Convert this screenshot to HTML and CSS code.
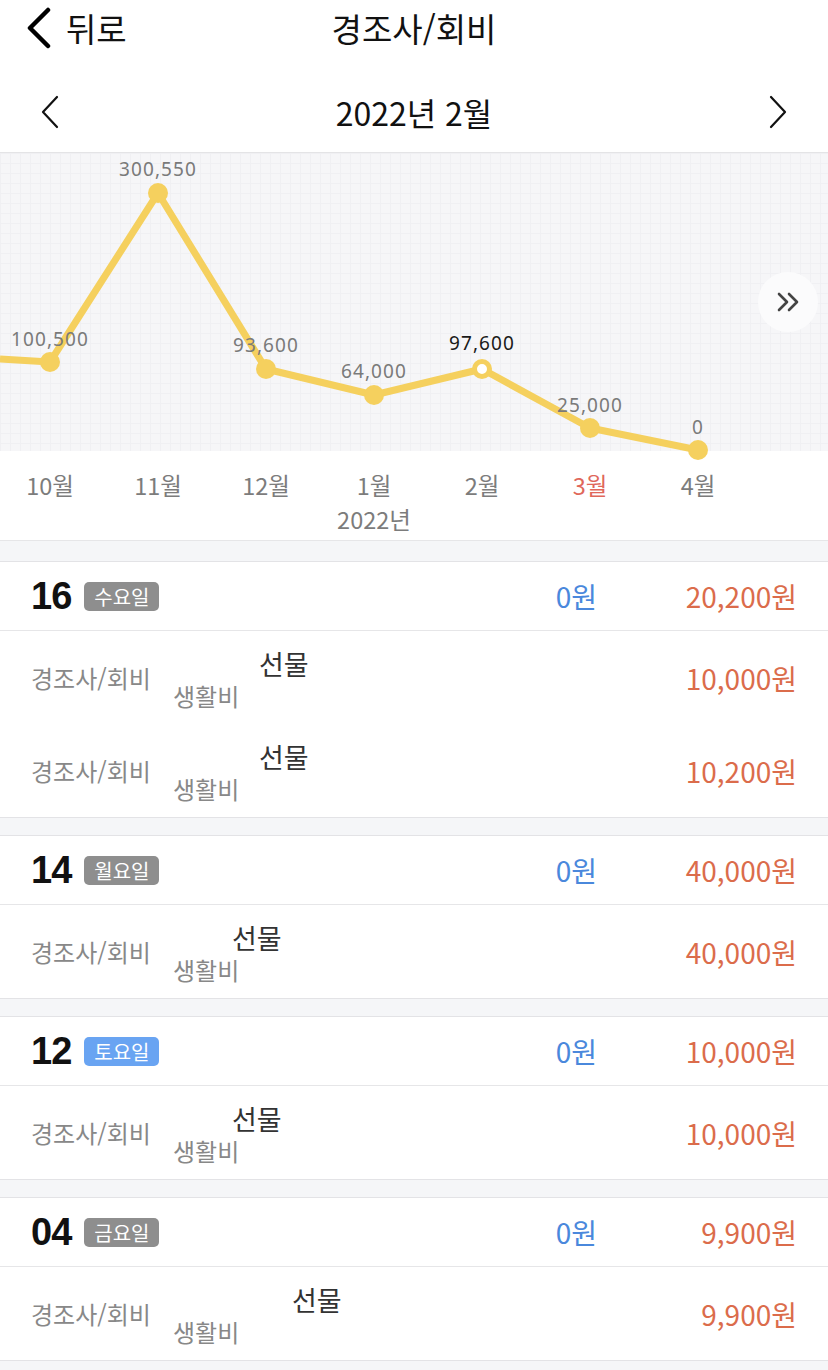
FILE: index.html
```html
<!DOCTYPE html>
<html lang="ko">
<head>
    <meta charset="UTF-8">
    <meta name="viewport" content="width=device-width, initial-scale=1.0">
    <title>경조사/회비</title>
    <link rel="stylesheet" href="styles.css">
</head>
<body>
    <header class="topbar">
        <a class="back" href="#">
            <svg class="back-icon" width="26" height="42" viewBox="0 0 26 42"><path d="M22 3 L4 21 L22 39" fill="none" stroke="#000" stroke-width="4.5" stroke-linecap="round" stroke-linejoin="round"/></svg>
            <span>뒤로</span>
        </a>
        <h1 class="title">경조사/회비</h1>
        <span></span>
    </header>

    <nav class="month-nav">
        <a href="#" class="month-arrow">
            <svg width="20" height="34" viewBox="0 0 20 34"><path d="M17 2 L3 17 L17 32" fill="none" stroke="#111" stroke-width="2.2" stroke-linecap="round" stroke-linejoin="round"/></svg>
        </a>
        <span class="month-label">2022년 2월</span>
        <a href="#" class="month-arrow">
            <svg width="20" height="34" viewBox="0 0 20 34"><path d="M3 2 L17 17 L3 32" fill="none" stroke="#111" stroke-width="2.2" stroke-linecap="round" stroke-linejoin="round"/></svg>
        </a>
    </nav>

    <!-- 월별 그래프 -->
    <section class="chart">
        <svg class="chart-svg" width="828" height="298" viewBox="0 0 828 298">
            <polyline points="0,206 50,209 158,40 266,216 374,242 482,216 590,275 698,297" fill="none" stroke="#f5d05e" stroke-width="7" stroke-linejoin="round"/>
            <g fill="#f5d05e">
                <circle cx="50" cy="209" r="10"/>
                <circle cx="158" cy="40" r="10"/>
                <circle cx="266" cy="216" r="10"/>
                <circle cx="374" cy="242" r="10"/>
                <circle cx="590" cy="275" r="10"/>
                <circle cx="698" cy="297" r="10"/>
            </g>
            <circle cx="482" cy="216" r="7.5" fill="#fff" stroke="#f5d05e" stroke-width="5"/>
            <g class="chart-value">
                <text x="50" y="193">100,500</text>
                <text x="158" y="23">300,550</text>
                <text x="266" y="199">93,600</text>
                <text x="374" y="225">64,000</text>
                <text x="482" y="197" class="current">97,600</text>
                <text x="590" y="259">25,000</text>
                <text x="698" y="281">0</text>
            </g>
        </svg>
        <a href="#" class="chart-next">
            <svg width="22" height="20" viewBox="0 0 22 20"><path d="M2 2 L10 10 L2 18 M12 2 L20 10 L12 18" fill="none" stroke="#444" stroke-width="2.6" stroke-linecap="round" stroke-linejoin="round"/></svg>
        </a>
    </section>

    <div class="months">
        <span>10월</span>
        <span>11월</span>
        <span>12월</span>
        <span>1월<span class="year">2022년</span></span>
        <span>2월</span>
        <span class="future">3월</span>
        <span>4월</span>
    </div>

    <main class="days">
        <!-- 16일 -->
        <section class="day">
            <div class="day-head">
                <span class="day-num">16</span>
                <span class="weekday">수요일</span>
                <span class="income">0원</span>
                <span class="expense">20,200원</span>
            </div>
            <div class="entry">
                <span class="entry-cat">경조사/회비</span>
                <div class="entry-info">
                    <span class="entry-memo"><i class="pad pad-86"></i>선물</span>
                    <span class="entry-sub">생활비</span>
                </div>
                <span class="entry-amount">10,000원</span>
            </div>
            <div class="entry">
                <span class="entry-cat">경조사/회비</span>
                <div class="entry-info">
                    <span class="entry-memo"><i class="pad pad-86"></i>선물</span>
                    <span class="entry-sub">생활비</span>
                </div>
                <span class="entry-amount">10,200원</span>
            </div>
        </section>

        <!-- 14일 -->
        <section class="day">
            <div class="day-head">
                <span class="day-num">14</span>
                <span class="weekday">월요일</span>
                <span class="income">0원</span>
                <span class="expense">40,000원</span>
            </div>
            <div class="entry">
                <span class="entry-cat">경조사/회비</span>
                <div class="entry-info">
                    <span class="entry-memo"><i class="pad pad-59"></i>선물</span>
                    <span class="entry-sub">생활비</span>
                </div>
                <span class="entry-amount">40,000원</span>
            </div>
        </section>

        <!-- 12일 -->
        <section class="day">
            <div class="day-head">
                <span class="day-num">12</span>
                <span class="weekday saturday">토요일</span>
                <span class="income">0원</span>
                <span class="expense">10,000원</span>
            </div>
            <div class="entry">
                <span class="entry-cat">경조사/회비</span>
                <div class="entry-info">
                    <span class="entry-memo"><i class="pad pad-59"></i>선물</span>
                    <span class="entry-sub">생활비</span>
                </div>
                <span class="entry-amount">10,000원</span>
            </div>
        </section>

        <!-- 04일 -->
        <section class="day">
            <div class="day-head">
                <span class="day-num">04</span>
                <span class="weekday">금요일</span>
                <span class="income">0원</span>
                <span class="expense">9,900원</span>
            </div>
            <div class="entry">
                <span class="entry-cat">경조사/회비</span>
                <div class="entry-info">
                    <span class="entry-memo"><i class="pad pad-119"></i>선물</span>
                    <span class="entry-sub">생활비</span>
                </div>
                <span class="entry-amount">9,900원</span>
            </div>
        </section>
    </main>
</body>
</html>
```

FILE: styles.css
```css
body {
    margin: 0;
    padding: 0;
    background: #fff;
    font-family: "Noto Sans CJK KR", "Noto Sans", sans-serif;
    color: #111;
}

a {
    color: inherit;
    text-decoration: none;
}

.topbar {
    display: grid;
    grid-template-columns: 1fr auto 1fr;
    align-items: center;
    height: 56px;
}

.back {
    display: flex;
    align-items: center;
    gap: 14px;
    padding-left: 26px;
    font-size: 33px;
    line-height: 40px;
}

.title {
    margin: 0;
    font-size: 33px;
    font-weight: 400;
    line-height: 40px;
}

.month-nav {
    display: flex;
    align-items: center;
    justify-content: space-between;
    height: 80px;
    padding: 16px 40px 0 40px;
    border-bottom: 1px solid #e4e4e6;
}

.month-arrow svg {
    display: block;
}

.month-label {
    font-size: 32px;
    line-height: 40px;
}

.chart {
    position: relative;
    height: 298px;
    background-color: #f6f6f8;
    background-image:
        linear-gradient(#f0f0f3 1px, transparent 1px),
        linear-gradient(90deg, #f0f0f3 1px, transparent 1px);
    background-size: 10px 10px;
}

.chart-svg {
    display: block;
    overflow: visible;
}

.chart-value text {
    font-family: "Noto Sans", "Liberation Sans", sans-serif;
    font-size: 19px;
    letter-spacing: 1.1px;
    fill: #7a7a7a;
    text-anchor: middle;
}

.chart-value text.current {
    fill: #1a1a1a;
}

.chart-next {
    position: absolute;
    right: 10px;
    top: 119px;
    width: 60px;
    height: 60px;
    border-radius: 50%;
    background: #fbfbfc;
    display: flex;
    align-items: center;
    justify-content: center;
}

.months {
    display: grid;
    grid-template-columns: repeat(7, 108px);
    margin-left: -4px;
    padding: 17px 0 4px;
    border-bottom: 1px solid #e6e6e8;
    font-size: 23.5px;
    line-height: 34px;
    color: #7c7c7c;
    text-align: center;
}

.months .year {
    display: block;
}

.months .future {
    color: #e0675a;
}

.days {
    background: #f5f6f8;
    padding-top: 20px;
    padding-bottom: 40px;
}

.day {
    background: #fff;
    border-top: 1px solid #e3e3e6;
    border-bottom: 1px solid #e3e3e6;
    margin-bottom: 17px;
}

.day-head {
    display: flex;
    align-items: center;
    height: 68px;
    padding: 0 31px;
    border-bottom: 1px solid #e6e6e8;
}

.day-num {
    font-family: "Liberation Sans", Arial, sans-serif;
    font-weight: 700;
    font-size: 38px;
    letter-spacing: -1px;
    margin-right: 13px;
}

.weekday {
    background: #8e8e8e;
    color: #fff;
    font-size: 20px;
    line-height: 29px;
    padding: 0 10px;
    border-radius: 5px;
}

.weekday.saturday {
    background: #69a4f2;
}

.income {
    margin-left: auto;
    color: #4a88dc;
    font-size: 28px;
}

.expense, .entry-amount {
    width: 200px;
    text-align: right;
    color: #db6c4b;
    font-size: 28px;
}

.entry {
    display: flex;
    align-items: center;
    height: 93px;
    padding: 0 31px;
}

.entry-cat {
    width: 142px;
    color: #888;
    font-size: 24px;
}

.entry-info {
    display: flex;
    flex-direction: column;
    margin-top: 5px;
}

.entry-memo {
    color: #333;
    font-size: 27px;
    line-height: 32px;
}

.entry-sub {
    color: #888;
    font-size: 24px;
    line-height: 32px;
}

.pad {
    display: inline-block;
}

.pad-59 { width: 59px; }
.pad-86 { width: 86px; }
.pad-119 { width: 119px; }

.entry-amount {
    margin-left: auto;
}
```
